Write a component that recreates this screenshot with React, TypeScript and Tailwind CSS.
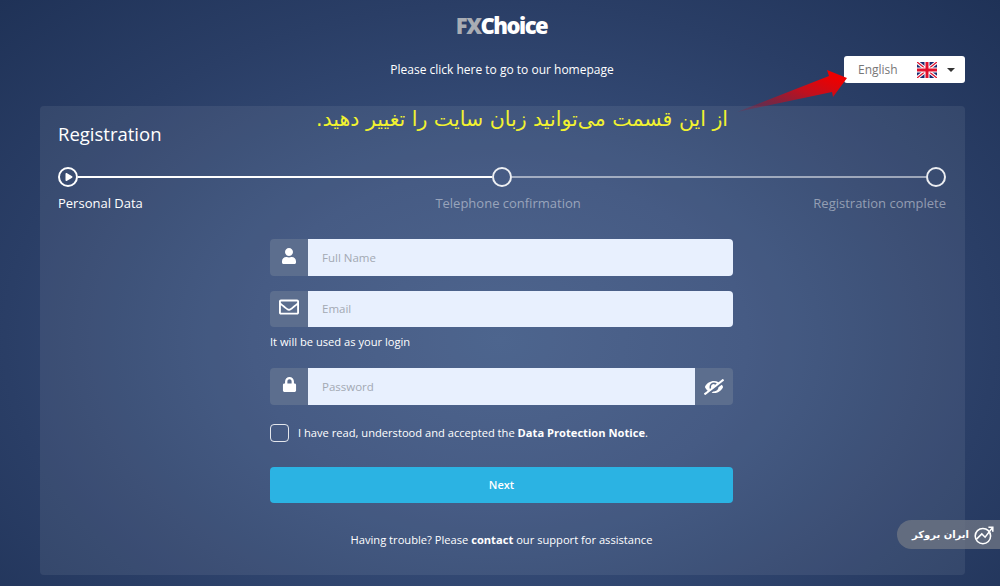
import { FaPlay, FaUser, FaRegEnvelope, FaLock, FaEyeSlash } from "react-icons/fa";

const STEPS = [
  { label: "Personal Data", active: true },
  { label: "Telephone confirmation", active: false },
  { label: "Registration complete", active: false },
];

function UkFlag() {
  return (
    <svg width="20" height="16" viewBox="0 0 60 48" className="block">
      <rect width="60" height="48" fill="#1c2a70" />
      <path d="M0 0L60 48M60 0L0 48" stroke="#fff" strokeWidth="10" />
      <path d="M0 0L60 48M60 0L0 48" stroke="#e0102c" strokeWidth="4" />
      <path d="M30 0V48M0 24H60" stroke="#fff" strokeWidth="15" />
      <path d="M30 0V48M0 24H60" stroke="#e0102c" strokeWidth="9" />
    </svg>
  );
}

function Field({
  icon,
  placeholder,
  right,
  short,
}: {
  icon: React.ReactNode;
  placeholder: string;
  right?: React.ReactNode;
  short?: boolean;
}) {
  return (
    <div className={"flex w-[463px] overflow-hidden rounded-[4px] " + (short ? "h-[36px]" : "h-[37px]")}>
      <div className="flex w-[38px] shrink-0 items-center justify-center bg-[#5c6e8e] pb-1 text-white">{icon}</div>
      <div className="flex flex-1 items-center bg-[#e8f0fe] pl-[14px] text-[11.5px] text-[#a3a9b3]">{placeholder}</div>
      {right}
    </div>
  );
}

export default function App() {
  return (
    <div className="relative h-[586px] w-[1000px] overflow-hidden bg-[radial-gradient(ellipse_at_50%_58%,#405985_0%,#384f7b_35%,#2a3e66_70%,#1f3257_100%)] font-['Open_Sans',sans-serif] text-white">
      {/* header */}
      <div className="relative h-[106px]">
        <div className="flex justify-center pl-[3px] pt-[10px] text-[22px] leading-[30px] font-extrabold tracking-[-1.5px]">
          <span className="text-[#a9adb4]">FX</span>
          <span>Choice</span>
        </div>
        <div className="mt-[20px] flex justify-center pl-1 text-[12px] leading-[20px]">
          Please click here to go to our homepage
        </div>
        <div className="absolute top-[56px] left-[844px] flex h-[27px] w-[121px] items-center rounded-[3px] bg-white pl-[14px] text-[12px] text-[#777]">
          <span className="w-[59px]">English</span>
          <UkFlag />
          <span className="ml-[10px] h-0 w-0 border-x-[4px] border-t-[4px] border-x-transparent border-t-[#333]" />
        </div>
      </div>

      {/* card */}
      <div className="ml-[40px] h-[469px] w-[925px] rounded-[4px] bg-white/[0.07] px-[18px] pt-[14px]">
        <h1 className="text-[18.5px] leading-[28px] text-white">Registration</h1>

        <div className="mt-[19px] flex w-[888px] items-center">
          <div className="flex h-[20px] w-[20px] shrink-0 items-center justify-center rounded-full border-2 border-white pl-[1px]">
            <FaPlay size={8} />
          </div>
          <div className="h-[2px] flex-1 bg-white" />
          <div className="h-[20px] w-[20px] shrink-0 rounded-full border-2 border-white/90" />
          <div className="h-[2px] flex-1 bg-white/50" />
          <div className="h-[20px] w-[20px] shrink-0 rounded-full border-2 border-white/90" />
        </div>
        <div className="mt-[6px] flex w-[888px] justify-between text-[13px] leading-[20px]">
          {STEPS.map((s, i) => (
            <span
              key={s.label}
              className={
                (s.active ? "text-white" : "text-white/45") + (i === 1 ? " pl-[60px]" : "")
              }
            >
              {s.label}
            </span>
          ))}
        </div>

        {/* form */}
        <div className="ml-[212px] mt-[26px] w-[463px]">
          <Field icon={<FaUser size={16} />} placeholder="Full Name" />
          <div className="mt-[15px]">
            <Field icon={<FaRegEnvelope size={20} />} placeholder="Email" short />
          </div>
          <p className="mt-[6px] text-[11.15px] leading-[18px]">It will be used as your login</p>
          <div className="mt-[17px]">
            <Field
              icon={<FaLock size={15} />}
              placeholder="Password"
              right={
                <div className="flex w-[38px] shrink-0 items-center justify-center bg-[#5c6e8e] text-white">
                  <FaEyeSlash size={20} className="-scale-x-100" />
                </div>
              }
            />
          </div>
          <div className="mt-[19px] flex h-[18px] items-center text-[11.15px]">
            <span className="h-[18px] w-[19px] shrink-0 rounded-[4px] border border-white/85" />
            <span className="ml-[9px]">
              I have read, understood and accepted the <b>Data Protection Notice</b>.
            </span>
          </div>
          <button className="mt-[25px] flex h-[36px] w-full items-center justify-center rounded-[4px] bg-[#2bb3e3] text-[11px] font-semibold text-white">
            Next
          </button>
          <p className="mt-[28px] text-center text-[11.15px] leading-[18px]">
            Having trouble? Please <b>contact</b> our support for assistance
          </p>
        </div>
      </div>

      {/* annotation over the page */}
      <p
        dir="rtl"
        className="absolute top-[105px] left-[300px] w-[428px] text-right font-['DejaVu_Sans',sans-serif] text-[20.5px] leading-[28px] whitespace-nowrap text-[#f2f230]"
      >
        از این قسمت می‌توانید زبان سایت را تغییر دهید.
      </p>
      <svg className="absolute top-[60px] left-[730px]" width="130" height="60" viewBox="0 0 130 60">
        <defs>
          <linearGradient id="arrowFill" x1="0" x2="1" y1="1" y2="0">
            <stop offset="0" stopColor="#a81028" stopOpacity="0.15" />
            <stop offset="0.55" stopColor="#c0101e" />
            <stop offset="0.85" stopColor="#ee0000" />
          </linearGradient>
        </defs>
        <path d="M7 52L99 16L97 10L117 18L103 37L102 32Z" fill="url(#arrowFill)" />
      </svg>

      {/* watermark */}
      <div className="absolute top-[520px] left-[897px] flex h-[29px] w-[103px] items-center justify-end gap-[4px] rounded-l-full bg-[#6d7483]/80 pr-[5px]">
        <span dir="rtl" className="font-['DejaVu_Sans',sans-serif] text-[10px] font-bold whitespace-nowrap">
          ایران بروکر
        </span>
        <svg width="22" height="22" viewBox="0 0 20 20" fill="none" stroke="white" strokeWidth="1.4">
          <circle cx="9" cy="11" r="7" />
          <path d="M3 14L8 9L11 12L18 3M14 3H18V7" />
        </svg>
      </div>
    </div>
  );
}
